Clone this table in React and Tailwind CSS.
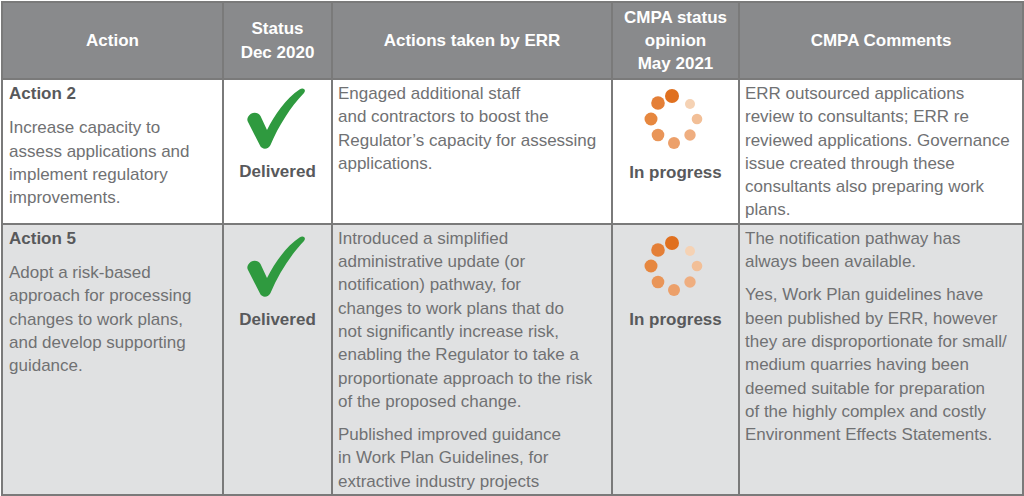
import React from 'react';

const rows = [
  {
    title: 'Action 2',
    action: ['Increase capacity to', 'assess applications and', 'implement regulatory', 'improvements.'],
    taken: [['Engaged additional staff', 'and contractors to boost the', 'Regulator’s capacity for assessing', 'applications.']],
    comments: [
      [
        'ERR outsourced applications',
        'review to consultants; ERR re',
        'reviewed applications. Governance',
        'issue created through these',
        'consultants also preparing work',
        'plans.',
      ],
    ],
    bg: 'bg-white',
    tickPad: 'pt-[8px]',
    spinPad: 'pt-[8px]',
  },
  {
    title: 'Action 5',
    action: ['Adopt a risk-based', 'approach for processing', 'changes to work plans,', 'and develop supporting', 'guidance.'],
    taken: [
      [
        'Introduced a simplified',
        'administrative update (or',
        'notification) pathway, for',
        'changes to work plans that do',
        'not significantly increase risk,',
        'enabling the Regulator to take a',
        'proportionate approach to the risk',
        'of the proposed change.',
      ],
      ['Published improved guidance', 'in Work Plan Guidelines, for', 'extractive industry projects'],
    ],
    comments: [
      ['The notification pathway has', 'always been available.'],
      [
        'Yes, Work Plan guidelines have',
        'been published by ERR, however',
        'they are disproportionate for small/',
        'medium quarries having been',
        'deemed suitable for preparation',
        'of the highly complex and costly',
        'Environment Effects Statements.',
      ],
    ],
    bg: 'bg-[#e0e1e2]',
    tickPad: 'pt-[11px]',
    spinPad: 'pt-[10px]',
  },
];

function Lines({ lines }) {
  return (
    <div>
      {lines.map((line) => (
        <div key={line} className="whitespace-nowrap">
          {line}
        </div>
      ))}
    </div>
  );
}

function Paragraphs({ paras }) {
  return (
    <div className="space-y-[10px]">
      {paras.map((p, i) => (
        <Lines key={i} lines={p} />
      ))}
    </div>
  );
}

function Tick() {
  return (
    <svg width="58" height="61" viewBox="0 0 57 61" className="mx-auto -translate-x-[2px]">
      <path
        d="M0.5 29 C3 24 10 23 13 28 L19.5 42 C27 27 39 10 52 1.5 C56 -1 59 2 56.5 5 C43 19 31 38 23 57 C21 61.5 14.5 62 12.5 57.5 L0.5 34 C-0.5 32 -0.3 30.5 0.5 29 Z"
        fill="#2f9a3f"
      />
    </svg>
  );
}

const dots = [
  { x: 26, y: 4, r: 7, c: '#e0701f' },
  { x: 12, y: 11, r: 6.8, c: '#e47f37' },
  { x: 5, y: 27, r: 6.5, c: '#e6873f' },
  { x: 12, y: 43, r: 6.3, c: '#e99558' },
  { x: 28, y: 51, r: 6, c: '#eca06a' },
  { x: 44, y: 43, r: 5.7, c: '#efae80' },
  { x: 51, y: 27, r: 5.3, c: '#f2bf97' },
  { x: 44, y: 12, r: 5, c: '#f5d2b4' },
];

function Spinner() {
  return (
    <svg width="62" height="62" viewBox="-3 -4 62 62" className="mx-auto -translate-x-[2px]">
      {dots.map((d) => (
        <circle key={`${d.x}-${d.y}`} cx={d.x} cy={d.y} r={d.r} fill={d.c} />
      ))}
    </svg>
  );
}

export default function App() {
  return (
    <div
      className="h-[496px] w-[1024px] overflow-hidden bg-white pl-px pt-px"
      style={{ fontFamily: '"Liberation Sans", Arial, sans-serif' }}
    >
      <table className="w-[1021px] table-fixed border-collapse border-2 border-[#7a7a7a] text-[17px] leading-[23.3px]">
        <colgroup>
          <col className="w-[221px]" />
          <col className="w-[109px]" />
          <col className="w-[280px]" />
          <col className="w-[127px]" />
          <col className="w-[284px]" />
        </colgroup>
        <thead>
          <tr className="h-[77px] bg-[#898a8c] text-white">
            <th className="border-2 border-[#7a7a7a] font-bold">Action</th>
            <th className="border-2 border-[#7a7a7a] font-bold">
              Status
              <br />
              Dec 2020
            </th>
            <th className="border-2 border-[#7a7a7a] font-bold">Actions taken by ERR</th>
            <th className="border-2 border-[#7a7a7a] font-bold">
              CMPA status
              <br />
              opinion
              <br />
              May 2021
            </th>
            <th className="border-2 border-[#7a7a7a] font-bold">CMPA Comments</th>
          </tr>
        </thead>
        <tbody className="text-[#707173]">
          {rows.map((row) => (
            <tr key={row.title} className={row.bg}>
              <td className="border-2 border-[#7a7a7a] px-[6px] pb-px pt-[2px] align-top">
                <div className="font-bold text-[#58595b]">{row.title}</div>
                <div className="mt-[11px]">
                  <Lines lines={row.action} />
                </div>
              </td>
              <td className={`border-2 border-[#7a7a7a] align-top ${row.tickPad}`}>
                <Tick />
                <div className="mt-[11px] text-center font-bold text-[#58595b]">Delivered</div>
              </td>
              <td className="border-2 border-[#7a7a7a] px-[5px] pb-px pt-[2px] align-top">
                <Paragraphs paras={row.taken} />
              </td>
              <td className={`border-2 border-[#7a7a7a] align-top ${row.spinPad}`}>
                <Spinner />
                <div className="mt-[11px] text-center font-bold text-[#58595b]">In progress</div>
              </td>
              <td className="border-2 border-[#7a7a7a] px-[5px] pb-px pt-[2px] align-top">
                <Paragraphs paras={row.comments} />
              </td>
            </tr>
          ))}
        </tbody>
      </table>
    </div>
  );
}
